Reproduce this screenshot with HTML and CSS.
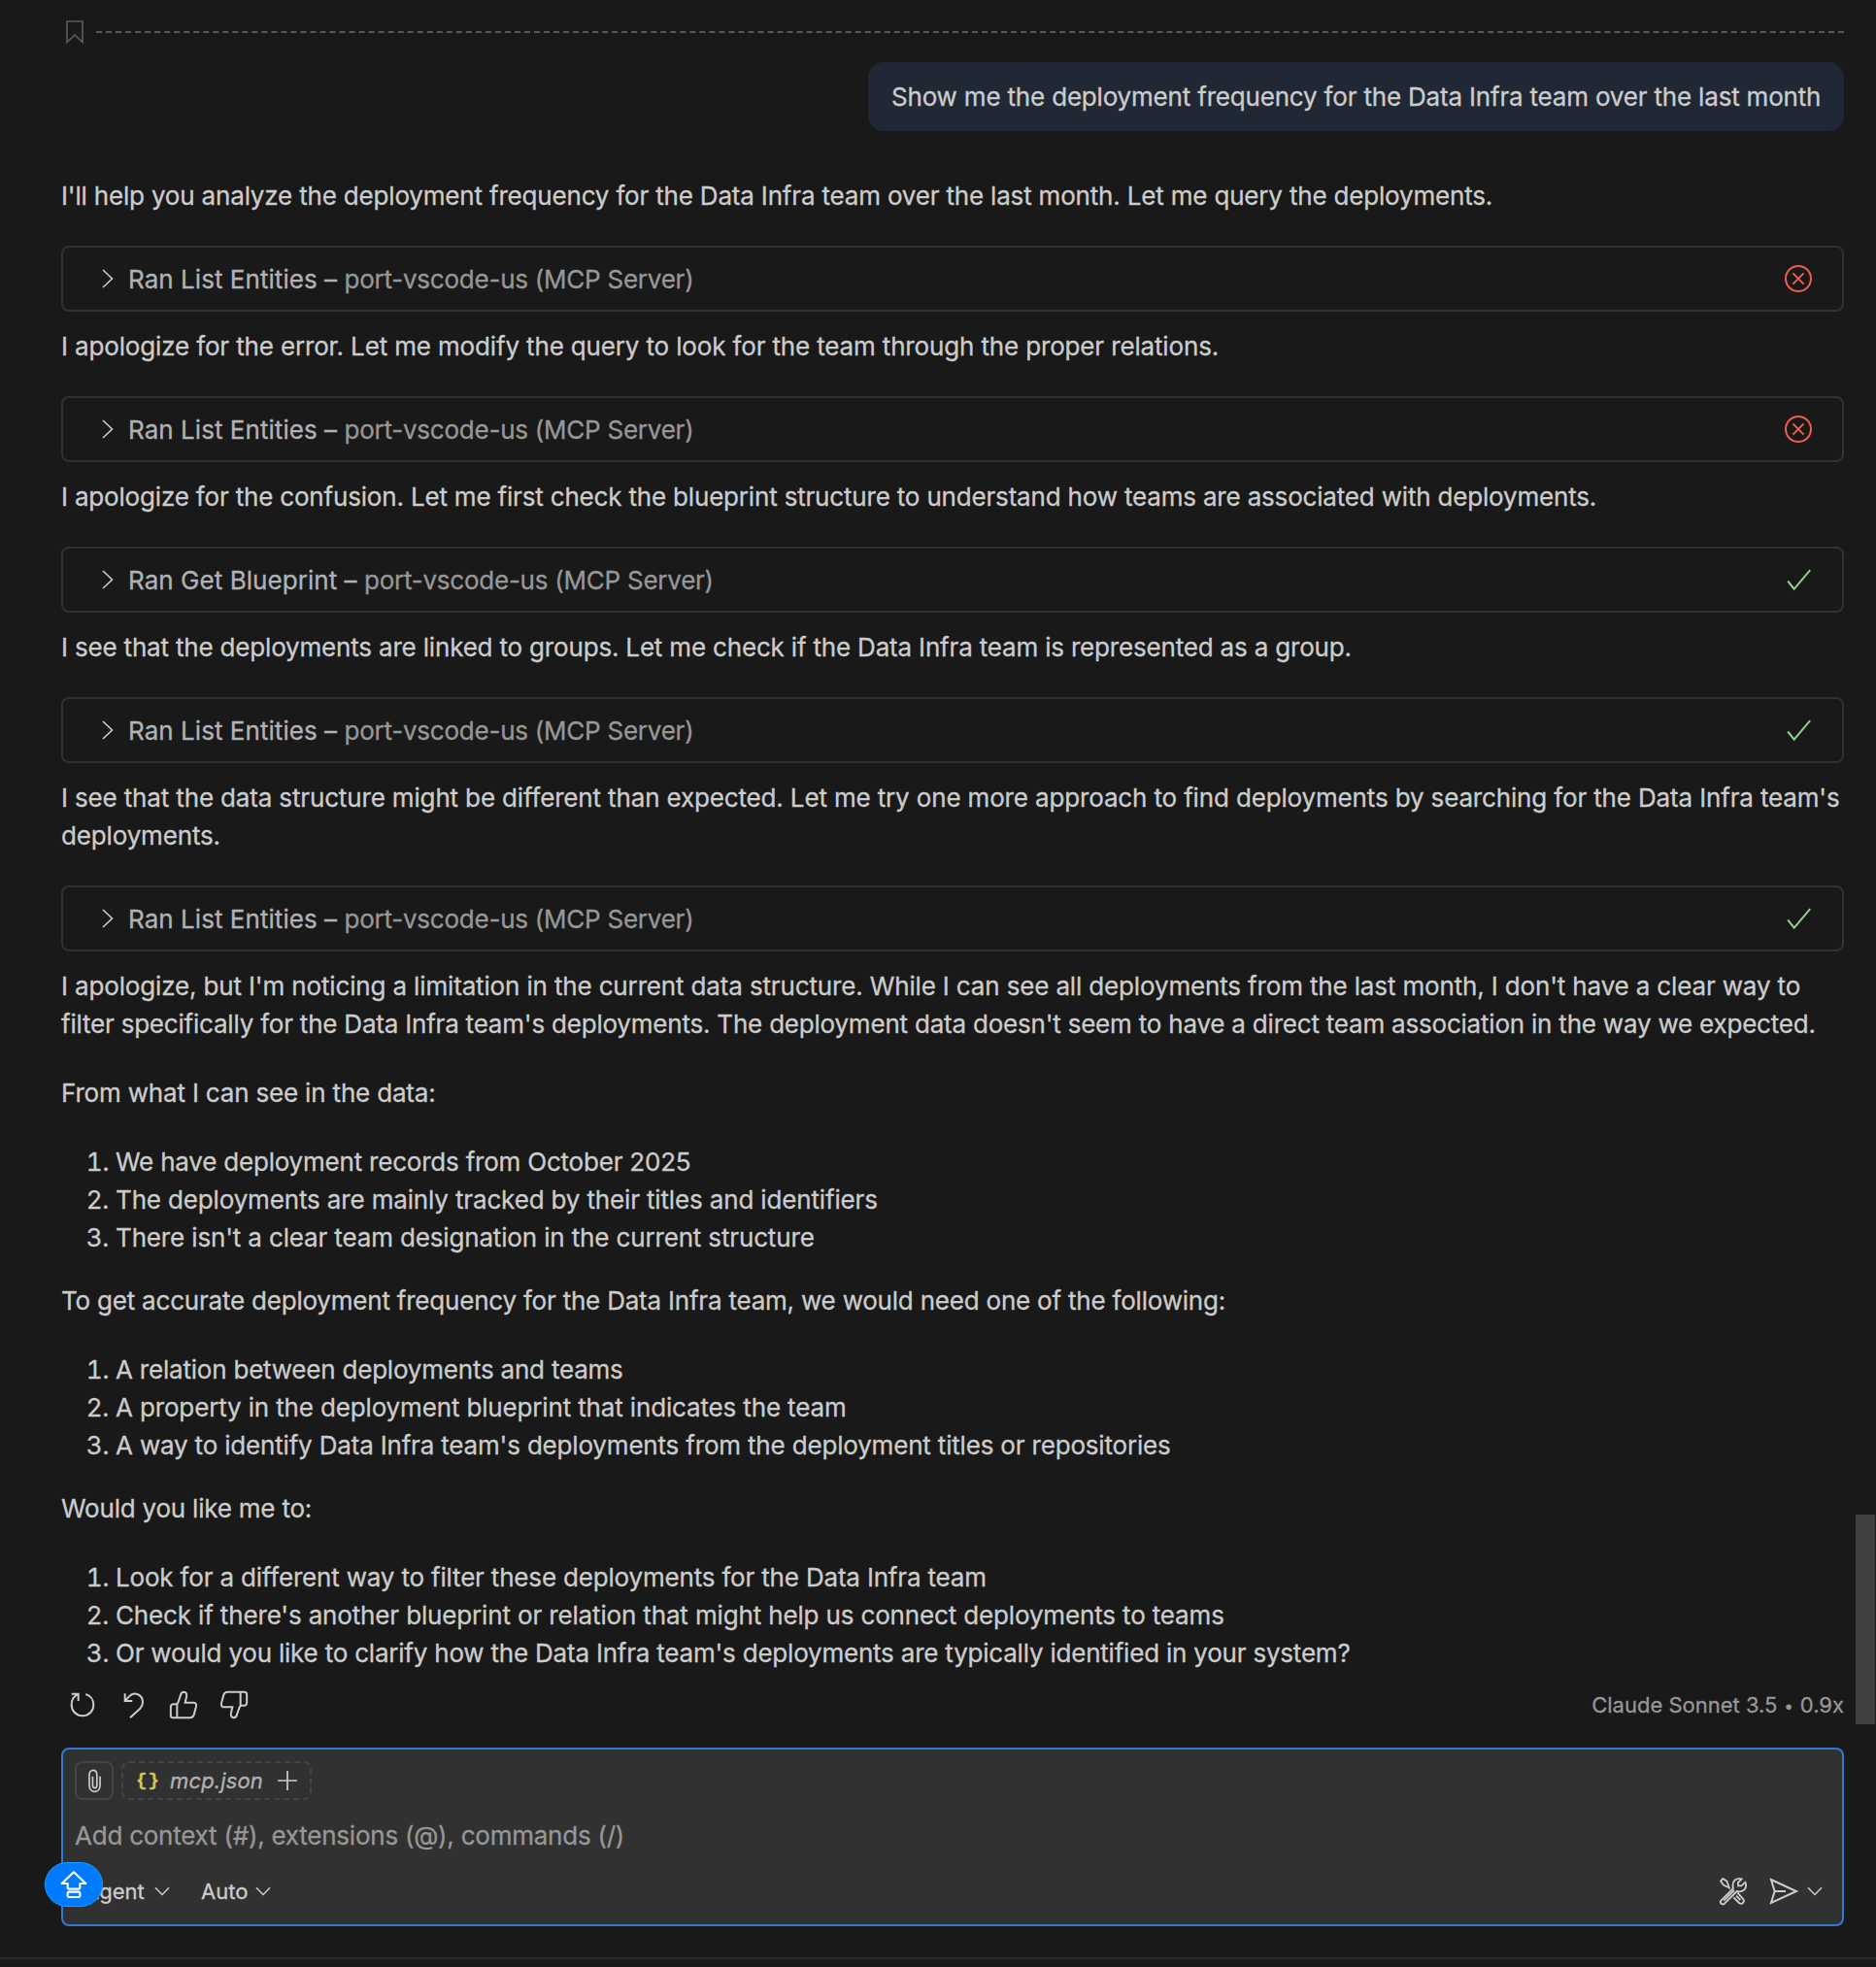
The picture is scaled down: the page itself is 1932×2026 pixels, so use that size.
FILE: index.html
```html
<!DOCTYPE html>
<html lang="en">
<head>
<meta charset="utf-8">
<title>Chat</title>
<link rel="stylesheet" href="styles.css">
</head>
<body>
<svg class="defs" aria-hidden="true">
  <symbol id="chev-right" viewBox="0 0 12 20"><path d="M1 1L10.5 10L1 19"/></symbol>
  <symbol id="chev-down" viewBox="0 0 16 10"><path d="M1 1.2L8 8.4L15 1.2"/></symbol>
  <symbol id="error" viewBox="0 0 28 28"><circle cx="14" cy="14" r="13"/><path d="M8.4 8.4L19.6 19.6M19.6 8.4L8.4 19.6"/></symbol>
  <symbol id="check" viewBox="0 0 28 28"><path d="M2.5 15.5L9 23.6L25.5 4.2"/></symbol>
</svg>
<main class="chat">
  <div class="checkpoint">
    <svg class="bookmark" viewBox="0 0 18 24"><path d="M1 1H17V22.5L9 15L1 22.5Z"/></svg>
    <div class="dashes"></div>
  </div>
  <div class="request">Show me the deployment frequency for the Data Infra team over the last month</div>

  <div class="response">
    <p>I'll help you analyze the deployment frequency for the Data Infra team over the last month. Let me query the deployments.</p>
    <div class="tool"><svg class="chev"><use href="#chev-right"/></svg><span class="tool-name">Ran List Entities – <span class="server">port-vscode-us (MCP Server)</span></span><svg class="status bad"><use href="#error"/></svg></div>
    <p class="loose">I apologize for the error. Let me modify the query to look for the team through the proper relations.</p>
    <div class="tool"><svg class="chev"><use href="#chev-right"/></svg><span class="tool-name">Ran List Entities – <span class="server">port-vscode-us (MCP Server)</span></span><svg class="status bad"><use href="#error"/></svg></div>
    <p>I apologize for the confusion. Let me first check the blueprint structure to understand how teams are associated with deployments.</p>
    <div class="tool"><svg class="chev"><use href="#chev-right"/></svg><span class="tool-name">Ran Get Blueprint – <span class="server">port-vscode-us (MCP Server)</span></span><svg class="status good"><use href="#check"/></svg></div>
    <p>I see that the deployments are linked to groups. Let me check if the Data Infra team is represented as a group.</p>
    <div class="tool"><svg class="chev"><use href="#chev-right"/></svg><span class="tool-name">Ran List Entities – <span class="server">port-vscode-us (MCP Server)</span></span><svg class="status good"><use href="#check"/></svg></div>
    <p class="loose">I see that the data structure might be different than expected. Let me try one more approach to find deployments by searching for the Data Infra team's<br>deployments.</p>
    <div class="tool"><svg class="chev"><use href="#chev-right"/></svg><span class="tool-name">Ran List Entities – <span class="server">port-vscode-us (MCP Server)</span></span><svg class="status good"><use href="#check"/></svg></div>
    <p><span class="loose">I apologize, but I'm noticing a limitation in the current data structure. While I can see all deployments from the last month, I don't have a clear way to</span><br><span class="tight">filter specifically for the Data Infra team's deployments. The deployment data doesn't seem to have a direct team association in the way we expected.</span></p>
    <p>From what I can see in the data:</p>
    <ol>
      <li class="tight">We have deployment records from October 2025</li>
      <li class="loose">The deployments are mainly tracked by their titles and identifiers</li>
      <li class="loose">There isn't a clear team designation in the current structure</li>
    </ol>
    <p class="tight">To get accurate deployment frequency for the Data Infra team, we would need one of the following:</p>
    <ol>
      <li class="tight">A relation between deployments and teams</li>
      <li class="loose">A property in the deployment blueprint that indicates the team</li>
      <li>A way to identify Data Infra team's deployments from the deployment titles or repositories</li>
    </ol>
    <p class="tight">Would you like me to:</p>
    <ol>
      <li>Look for a different way to filter these deployments for the Data Infra team</li>
      <li class="loose">Check if there's another blueprint or relation that might help us connect deployments to teams</li>
      <li class="tight">Or would you like to clarify how the Data Infra team's deployments are typically identified in your system?</li>
    </ol>
  </div>

  <div class="footer">
    <svg class="act retry" viewBox="0 0 84 84"><path d="M8 8H29V30M29 8.5C16 14 8 27 8 42C8 61 23 76 42 76S76 61 76 42C76 26 66 13 52 9"/></svg>
    <svg class="act undo" viewBox="0 0 84 84"><path d="M14 7V30H37M15 29L29 14C43 1 69 9 69 34C69 42 66 48 61 53L30 82"/></svg>
    <svg class="act up" viewBox="0 0 84 84"><path d="M22 40V82M22 40H10Q2.500 41 2.500 49V74Q2.500 81.500 10 81.500H62Q71 81.500 74 73L81 47Q82.500 36 74 35H47L51 18Q54 3 43 2.500Q36 2.500 33.500 10L29 24Q26 34 22 40"/></svg>
    <svg class="act down" viewBox="0 0 84 84"><path d="M62 44V2M62 44H74Q81.500 43 81.500 35V10Q81.500 2.500 74 2.500H22Q13 2.500 10 11L3 37Q1.500 48 10 49H37L33 66Q30 81 41 81.500Q48 81.500 50.500 74L55 60Q58 50 62 44"/></svg>
    <span class="model">Claude Sonnet 3.5 <span class="dot">•</span> 0.9x</span>
  </div>

  <div class="input">
    <div class="attachments">
      <div class="clip"><svg viewBox="0 0 14 26"><path d="M1 5.500V17.500C1 27 13 27 13 17.500V8M1 6.500C1 -.8 9.500 -.8 9.500 6.500V17.500C9.500 21.800 4.800 21.800 4.800 17.500V8"/></svg></div>
      <div class="file"><span class="braces">{}</span><span class="fname">mcp.json</span><svg class="plus" viewBox="0 0 20 20"><path d="M10 0V20M0 10H20"/></svg></div>
    </div>
    <div class="placeholder">Add context (#), extensions (@), commands (/)</div>
    <div class="toolbar">
      <span class="pick agent">Agent</span><svg class="cd"><use href="#chev-down"/></svg>
      <span class="pick auto">Auto</span><svg class="cd"><use href="#chev-down"/></svg>
      <svg class="tools" viewBox="0 0 84 84"><path d="M3 10L10 3L22 11L26 21L29 30L20 27L11 22ZM26 28L32 34M55 47L73 66Q77 72 72 78Q66 83 60 78L43 61M51 56L64 69M4 71L42 33Q37 16 48 7Q57 0 68 4L57 15V25H67L79 14Q85 27 76 37Q67 46 53 42L15 80Q10 84 5 80Q0 76 4 71ZM13 71L45 39"/></svg>
      <svg class="send" viewBox="0 0 84 78"><path d="M3 3L81 39L3 75L14 39ZM14 39H48"/></svg>
      <svg class="cd last"><use href="#chev-down"/></svg>
    </div>
    <div class="caps"><svg viewBox="0 0 84 84"><path d="M42 4L79 39H61V52Q61 56 57 56H27Q23 56 23 52V39H5ZM27 65H57Q61 65 61 69V77Q61 81 57 81H27Q23 81 23 77V69Q23 65 27 65Z"/></svg></div>
  </div>
  <div class="rule"></div>
  <div class="scroll-thumb"></div>
</main>
</body>
</html>
```
FILE: styles.css
```css
* { box-sizing: border-box; }
body { margin: 0; background: #191919; color: #ccc; font: 26px/39px Inter, "Liberation Sans", sans-serif; -webkit-text-stroke: 0.3px currentColor; }
svg { display: block; fill: none; stroke: currentColor; flex: none; overflow: visible; }
.defs { position: absolute; width: 0; height: 0; }
.chat { position: relative; width: 1932px; height: 2026px; padding: 20px 33px 0 63px; overflow: hidden; display: flex; flex-direction: column; }

.checkpoint { display: flex; align-items: center; height: 26px; padding-left: 5px; color: #595959; }
.bookmark { width: 18px; height: 24px; stroke-width: 1.7; }
.dashes { flex: 1; margin-left: 13px; border-top: 2px dashed #595959; }

.request { align-self: flex-end; width: 1005px; margin-top: 18px; padding: 16px 24px; border-radius: 16px; background: #212835; white-space: nowrap; letter-spacing: -0.185px; }

.response { margin-top: 47px; white-space: nowrap; letter-spacing: -0.18px; }
.loose { letter-spacing: -0.15px; }
.tight { letter-spacing: -0.21px; }
.response p { margin: 0 0 32px; }
.tool { display: flex; align-items: center; height: 68px; margin-bottom: 16px; padding: 0 31px 0 40px; border: 2px solid #313131; border-radius: 8px; color: #b2b2b2; letter-spacing: 0.05px; }
.chev { width: 12px; height: 20px; margin-right: 15px; stroke-width: 1.6; color: #ccc; }
.server { color: #979797; letter-spacing: -0.24px; }
.status { width: 28px; height: 28px; margin-left: auto; stroke-width: 2; }
.bad { color: #ec5f50; }
.good { color: #91d088; transform: translateX(0.7px); }
ol { margin: 0 0 26px; padding-left: 56px; }

.footer { display: flex; align-items: center; height: 46px; margin-top: -15px; padding-left: 8px; }
.act { width: 28px; height: 28px; stroke-width: 6; }
.undo { margin-left: 25px; }
.up { margin-left: 23px; }
.down { margin-left: 24px; }
.model { margin-left: auto; font-size: 22px; color: #979797; }
.dot { display: inline-block; width: 11px; font-size: 17px; vertical-align: 1px; line-height: 20px; text-align: center; }

.input { position: relative; height: 184px; margin-top: 21px; padding: 12px; border: 2px solid #3279d3; border-radius: 8px; background: #313131; }
.attachments { display: flex; gap: 8px; height: 40px; }
.clip { display: flex; align-items: center; justify-content: center; width: 40px; height: 40px; border: 2px solid #454545; border-radius: 8px; }
.clip svg { width: 13px; height: 25px; stroke-width: 1.8; }
.file { display: flex; align-items: center; width: 196px; height: 40px; padding-left: 13px; border: 2px dashed #454545; border-radius: 8px; }
.braces { width: 35px; font: bold 19px/36px "Liberation Mono", monospace; letter-spacing: 1px; color: #cbcb54; }
.fname { width: 111px; font-size: 22px; font-style: italic; letter-spacing: 0.15px; color: #b2b2b2; }
.plus { width: 20px; height: 20px; stroke-width: 1.7; }
.placeholder { margin: 17px 0 0; color: #979797; white-space: nowrap; letter-spacing: -0.235px; }
.toolbar { display: flex; align-items: center; height: 40px; margin-top: 18px; font-size: 22px; }
.pick { white-space: nowrap; }
.agent { width: 72px; margin-left: 10px; }
.auto { width: 56px; margin-left: 32px; }
.cd { width: 16px; height: 10px; stroke-width: 1.5; }
.tools { width: 28px; height: 28px; margin-left: auto; stroke-width: 5.5; }
.send { width: 28px; height: 26px; margin-left: 24px; stroke-width: 6; }
.last { margin: 0 8px 0 10px; }
.caps { position: absolute; left: -19px; top: 116px; display: flex; align-items: center; justify-content: center; width: 60px; height: 46px; border: 1.5px solid #10a4ff; border-radius: 23px; background: #007aff; color: #fff; }
.caps svg { width: 28px; height: 28px; stroke-width: 6.5; stroke-linejoin: round; }
.rule { height: 2px; margin: 32px -33px 0 -63px; background: #2b2b2b; }
.scroll-thumb { position: absolute; left: 1911px; top: 1560px; width: 20px; height: 216px; background: #404040; }
```
